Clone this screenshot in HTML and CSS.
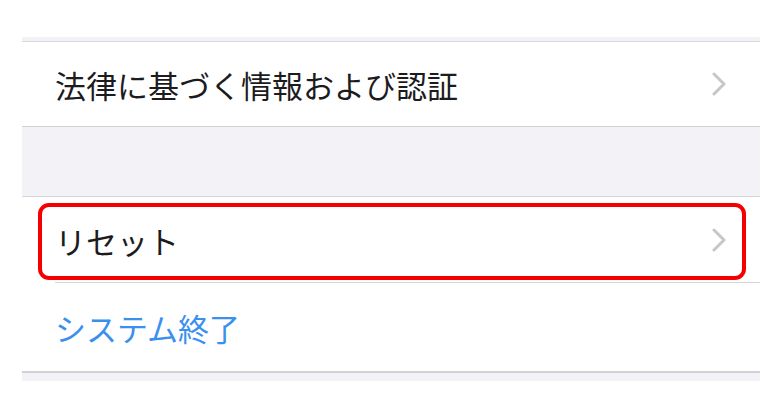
FILE: index.html
```html
<!DOCTYPE html>
<html lang="ja">
<head>
  <meta charset="UTF-8">
  <title>一般</title>
  <link rel="stylesheet" href="styles.css">
</head>
<body>
  <div class="settings">
    <div class="band band-thin"></div>

    <div class="row row-full row-legal">
      <span class="label">法律に基づく情報および認証</span>
      <svg class="chevron" width="14" height="24" viewBox="0 0 14 24"><polyline points="2,2 12,12 2,22" fill="none" stroke="#c6c6cb" stroke-width="3" stroke-linecap="round" stroke-linejoin="round"/></svg>
    </div>

    <div class="band band-wide"></div>

    <div class="row row-inset">
      <span class="label">リセット</span>
      <svg class="chevron" width="14" height="24" viewBox="0 0 14 24"><polyline points="2,2 12,12 2,22" fill="none" stroke="#c6c6cb" stroke-width="3" stroke-linecap="round" stroke-linejoin="round"/></svg>
      <div class="marker"></div>
    </div>

    <div class="row row-full row-shutdown">
      <span class="label label-blue">システム終了</span>
    </div>

    <div class="band band-bottom"></div>
  </div>
</body>
</html>
```

FILE: styles.css
```css
body {
  margin: 0;
  background: #fff;
  font-family: "Noto Sans CJK JP", "Noto Sans", sans-serif;
}
.settings {
  margin: 37px 23px 0 22px;
}
.band {
  background: #f2f2f7;
  border-bottom: 1px solid #d8d8dc;
}
.band-thin {
  height: 4px;
}
.band-wide {
  height: 69px;
}
.band-bottom {
  border-bottom: none;
  border-top: 1px solid #d0d0d4;
  height: 8px;
}
.row {
  position: relative;
  height: 86px;
  display: flex;
  align-items: center;
  justify-content: space-between;
  padding: 0 34px 0 33px;
  background: #fff;
}
.row-full {
  border-bottom: 1px solid #d2d2d6;
}
.row-legal {
  height: 84px;
}
.row-shutdown {
  height: 88px;
}
.row-inset::after {
  content: "";
  position: absolute;
  left: 33px;
  right: 0;
  bottom: 0;
  height: 1px;
  background: #d8d8dc;
}
.label {
  font-size: 31px;
  color: #1c1c1e;
}
.label-blue {
  color: #3a8fef;
}
.chevron {
  flex-shrink: 0;
}
.marker {
  position: absolute;
  left: 16px;
  right: 14px;
  top: 6px;
  bottom: 3px;
  border: 4px solid #f50000;
  border-radius: 11px;
}
```
